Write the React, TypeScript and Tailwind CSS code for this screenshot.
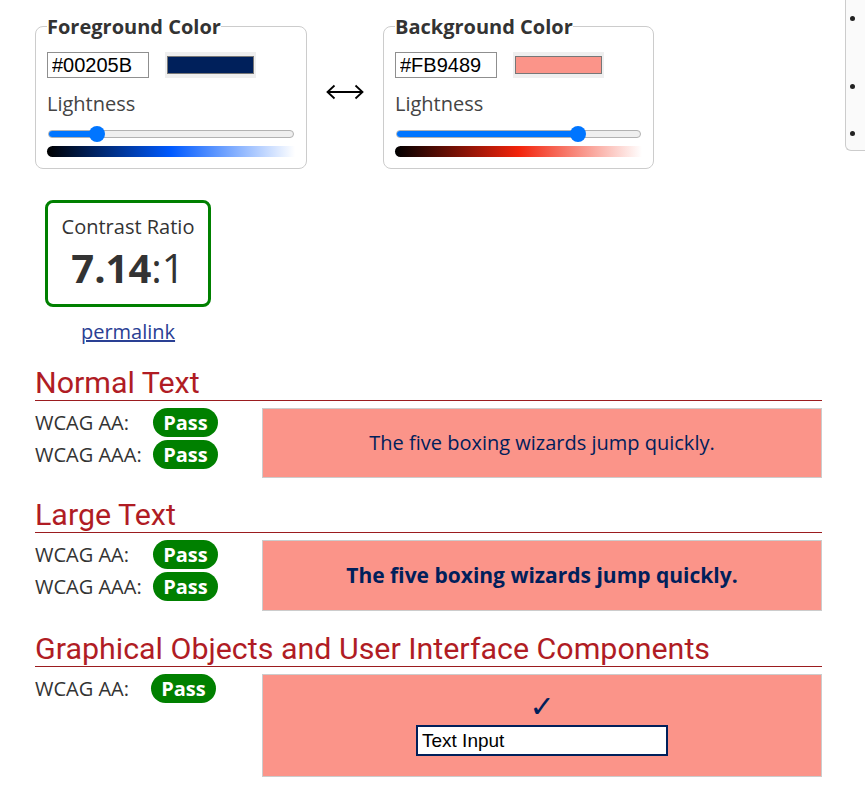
import React from 'react'

type Pick = {
  title: string
  hex: string
  light: number
  grad: string
}

const fg: Pick = {
  title: 'Foreground Color',
  hex: '#00205B',
  light: 0.178,
  grad: 'bg-[linear-gradient(to_right,#000000,#005aff,#ffffff)]',
}

const bg: Pick = {
  title: 'Background Color',
  hex: '#FB9489',
  light: 0.761,
  grad: 'bg-[linear-gradient(to_right,#000000,#f2230b,#ffffff)]',
}

const ColorPicker = ({ pick, width }: { pick: Pick; width: string }) => (
  <fieldset className={`${width} shrink-0 border border-[#cccccc] rounded-[8px] px-[11px] pt-[12px] pb-[11px]`}>
    <legend className="font-['Open_Sans',sans-serif] font-bold text-[20px] leading-[27px] text-[#333333]">
      {pick.title}
    </legend>
    <div className="flex items-center gap-[16px]">
      <input
        readOnly
        value={pick.hex}
        className="w-[102px] h-[26px] border border-[#8f8f8f] px-[4px] font-['Liberation_Sans',Arial,sans-serif] text-[20px] text-black outline-none"
      />
      <div className="w-[91px] h-[26px] bg-[#efefef] flex items-center justify-center">
        <div className="w-[87px] h-[18px] border border-[#777777]" style={{ backgroundColor: pick.hex }} />
      </div>
    </div>
    <div className="mt-[12px] font-['Open_Sans',sans-serif] text-[20px] leading-[27px] text-[#444444]">Lightness</div>
    {/* slider */}
    <div className="relative mt-[9px] h-[16px] mx-[1px] flex items-center">
      <div className="w-full h-[8px] rounded-full bg-[#efefef] border border-[#b2b2b2] overflow-hidden">
        <div className="h-full bg-[#0075ff]" style={{ width: `calc(${pick.light} * (100% - 16px) + 8px)` }} />
      </div>
      <div
        className="absolute top-0 w-[16px] h-[16px] rounded-full bg-[#0075ff]"
        style={{ left: `calc(${pick.light} * (100% - 16px))` }}
      />
    </div>
    <div className={`mt-[4px] h-[11px] rounded-l-full ${pick.grad}`} />
  </fieldset>
)

const Pass = () => (
  <div className="w-[65px] h-[29px] rounded-full bg-[#008000] flex items-center justify-center font-['Open_Sans',sans-serif] font-bold text-[20px] leading-[27px] text-white">
    Pass
  </div>
)

const Row = ({ label, labelWidth }: { label: string; labelWidth: string }) => (
  <div className="flex items-center h-[29px]">
    <div className={`${labelWidth} font-['Open_Sans',sans-serif] text-[20px] leading-[27px] text-[#333333]`}>{label}</div>
    <Pass />
  </div>
)

const Heading = ({ children, gap }: { children: React.ReactNode; gap: string }) => (
  <h2 className={`${gap} font-['Roboto',sans-serif] text-[30.4px] leading-[34px] text-[#b01c24] border-b border-[#9b1c1f]`}>
    {children}
  </h2>
)

export default function App() {
  return (
    <div className="w-full h-[795px] overflow-hidden bg-white flex">
      <div className="w-[845px] shrink-0 pt-[13px] pl-[35px] pr-[23px]">
        {/* pickers */}
        <div className="flex items-start">
          <ColorPicker pick={fg} width="w-[272px]" />
          <div className="w-[76px] shrink-0 flex justify-center mt-[69px]">
            <svg width="38" height="20" viewBox="0 0 38 20" fill="none" stroke="#000" strokeWidth="1.8">
              <line x1="1.5" y1="10" x2="36.5" y2="10" />
              <polyline points="8.5,3.5 1.5,10 8.5,16.5" />
              <polyline points="29.5,3.5 36.5,10 29.5,16.5" />
            </svg>
          </div>
          <ColorPicker pick={bg} width="w-[271px]" />
        </div>

        {/* ratio */}
        <div className="ml-[10px] w-[166px] flex flex-col items-center">
          <div className="mt-[31px] w-[166px] h-[107px] border-[3px] border-[#008000] rounded-[8px] pt-[10px] flex flex-col items-center text-[#333333] font-['Open_Sans',sans-serif]">
            <div className="text-[20px] leading-[27px]">Contrast Ratio</div>
            <div className="mt-[6px] text-[40px] leading-[44px]">
              <span className="font-bold">7.14</span>:1
            </div>
          </div>
          <a href="#" className="mt-[11px] font-['Open_Sans',sans-serif] text-[20px] leading-[27px] text-[#2a4094] underline">
            permalink
          </a>
        </div>

        {/* normal text */}
        <Heading gap="mt-[21px]">Normal Text</Heading>
        <div className="mt-[7px] flex items-start">
          <div className="w-[227px] shrink-0 flex flex-col gap-[3px]">
            <Row label="WCAG AA:" labelWidth="w-[118px]" />
            <Row label="WCAG AAA:" labelWidth="w-[118px]" />
          </div>
          <div className="w-[560px] h-[70px] bg-[#FB9489] border border-[#cccccc] flex items-center justify-center font-['Open_Sans',sans-serif] text-[20px] text-[#00205B]">
            The five boxing wizards jump quickly.
          </div>
        </div>

        {/* large text */}
        <Heading gap="mt-[20px]">Large Text</Heading>
        <div className="mt-[7px] flex items-start">
          <div className="w-[227px] shrink-0 flex flex-col gap-[3px]">
            <Row label="WCAG AA:" labelWidth="w-[118px]" />
            <Row label="WCAG AAA:" labelWidth="w-[118px]" />
          </div>
          <div className="w-[560px] h-[71px] bg-[#FB9489] border border-[#cccccc] flex items-center justify-center font-['Open_Sans',sans-serif] font-bold text-[21px] text-[#00205B]">
            The five boxing wizards jump quickly.
          </div>
        </div>

        {/* graphical objects */}
        <Heading gap="mt-[21px]">Graphical Objects and User Interface Components</Heading>
        <div className="mt-[7px] flex items-start">
          <div className="w-[227px] shrink-0 flex flex-col">
            <Row label="WCAG AA:" labelWidth="w-[116px]" />
          </div>
          <div className="w-[560px] h-[103px] bg-[#FB9489] border border-[#cccccc] pt-[17px] flex flex-col items-center">
            <div className="font-['DejaVu_Sans',sans-serif] font-bold text-[30px] leading-[30px] text-[#00205B]">✓</div>
            <input
              readOnly
              value="Text Input"
              className="mt-[3px] w-[252px] h-[31px] bg-white border-2 border-[#00205B] px-[4px] font-['Liberation_Sans',Arial,sans-serif] text-[19px] text-black outline-none"
            />
          </div>
        </div>
      </div>

      {/* side panel, cut off */}
      <div className="w-[40px] h-[151px] shrink-0 bg-[#fafafa] border-l border-b border-[#cccccc] rounded-bl-[6px] pl-[4px] flex flex-col">
        <div className="mt-[16px] w-[5px] h-[5px] rounded-full bg-[#222222]" />
        <div className="mt-[63px] w-[5px] h-[5px] rounded-full bg-[#222222]" />
        <div className="mt-[42px] w-[5px] h-[5px] rounded-full bg-[#222222]" />
      </div>
    </div>
  )
}
